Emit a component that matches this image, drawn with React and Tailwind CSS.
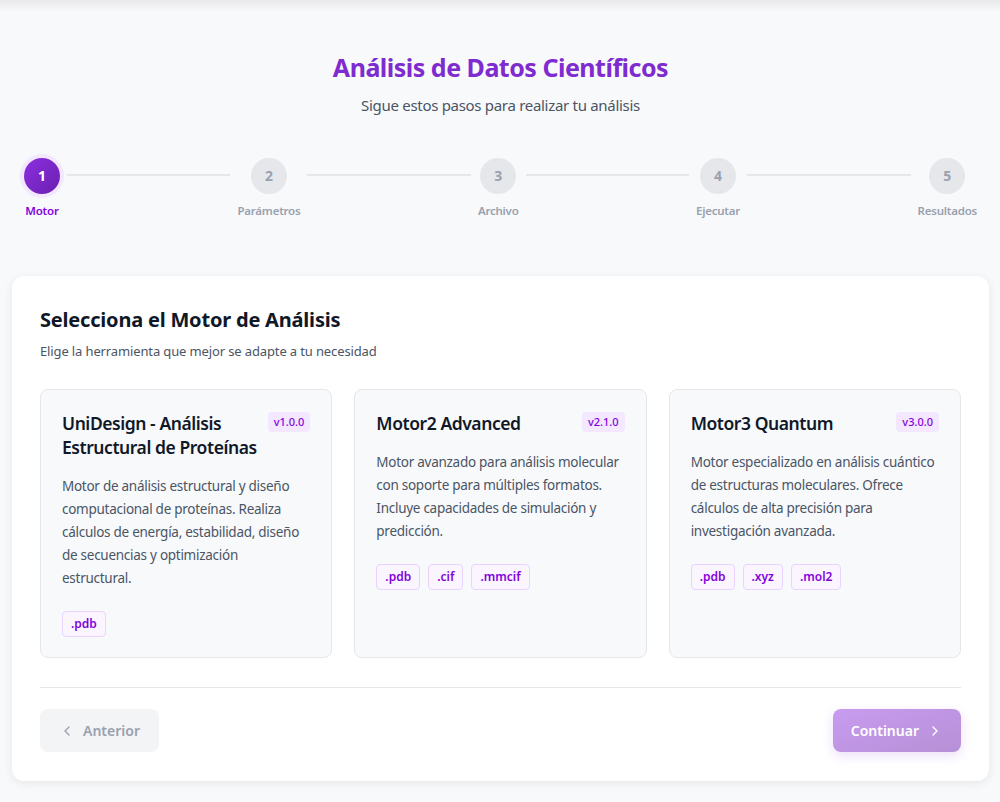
import { Fragment } from 'react';
import { ChevronLeft, ChevronRight } from 'lucide-react';

const steps = ['Motor', 'Parámetros', 'Archivo', 'Ejecutar', 'Resultados'];

const engines = [
  {
    name: 'UniDesign - Análisis Estructural de Proteínas',
    version: 'v1.0.0',
    desc: 'Motor de análisis estructural y diseño computacional de proteínas. Realiza cálculos de energía, estabilidad, diseño de secuencias y optimización estructural.',
    formats: ['.pdb'],
  },
  {
    name: 'Motor2 Advanced',
    version: 'v2.1.0',
    desc: 'Motor avanzado para análisis molecular con soporte para múltiples formatos. Incluye capacidades de simulación y predicción.',
    formats: ['.pdb', '.cif', '.mmcif'],
  },
  {
    name: 'Motor3 Quantum',
    version: 'v3.0.0',
    desc: 'Motor especializado en análisis cuántico de estructuras moleculares. Ofrece cálculos de alta precisión para investigación avanzada.',
    formats: ['.pdb', '.xyz', '.mol2'],
  },
];

export default function App() {
  return (
    <div className="min-h-screen bg-[#f8f9fb] font-['Noto_Sans',sans-serif] text-gray-900">
      <div className="h-3 bg-gradient-to-b from-[#e9e9ec] to-transparent" />

      <div className="pl-3 pr-[11px] pb-6">
        {/* Header */}
        <div className="text-center pt-[37px]">
          <h1 className="text-[25px] leading-[36px] font-bold tracking-[-0.02em] text-[#7e2bd0]">Análisis de Datos Científicos</h1>
          <p className="mt-[9px] text-[15px] tracking-[-0.02em] text-gray-600">Sigue estos pasos para realizar tu análisis</p>
        </div>

        {/* Stepper */}
        <div className="flex items-start px-3 mt-[41px]">
          {steps.map((s, i) => (
            <Fragment key={s}>
              <div className="flex flex-col items-center shrink-0">
                {i === 0 ? (
                  <div className="w-9 h-9 rounded-full bg-gradient-to-br from-[#8b2fe0] to-[#6b1fb0] ring-4 ring-purple-100 flex items-center justify-center text-white text-sm font-bold">
                    1
                  </div>
                ) : (
                  <div className="w-9 h-9 rounded-full bg-gray-200 flex items-center justify-center text-gray-400 text-sm font-bold">
                    {i + 1}
                  </div>
                )}
                <span className={`mt-[8px] text-[11.5px] tracking-[-0.02em] font-semibold ${i === 0 ? 'text-purple-700' : 'text-gray-400'}`}>{s}</span>
              </div>
              {i < steps.length - 1 && <div className="flex-1 h-0.5 bg-gray-200 mx-[7px] mt-[16px]" />}
            </Fragment>
          ))}
        </div>

        {/* Main card */}
        <div className="mt-[57px] bg-white rounded-xl shadow-[0_2px_10px_rgba(0,0,0,0.08)] px-7 pt-[30px] pb-[29px]">
          <h2 className="text-xl font-bold tracking-[-0.01em] text-gray-900">Selecciona el Motor de Análisis</h2>
          <p className="mt-[8px] text-[13px] tracking-[-0.01em] text-gray-600">Elige la herramienta que mejor se adapte a tu necesidad</p>

          <div className="grid grid-cols-3 gap-[22px] mt-[28px]">
            {engines.map((e) => (
              <div key={e.name} className="bg-[#f8f9fb] border border-gray-200 rounded-lg px-[21px] pt-[21px] pb-[20px]">
                <div className="flex items-start justify-between gap-2">
                  <h3 className="text-[17.5px] leading-6 font-semibold tracking-[-0.025em] text-gray-900">{e.name}</h3>
                  <span className="shrink-0 mt-[1px] text-[11px] leading-5 font-medium text-purple-700 bg-purple-100 rounded px-1.5">{e.version}</span>
                </div>
                <p className="mt-[16px] text-[13.5px] leading-[23px] tracking-[-0.02em] text-gray-600">{e.desc}</p>
                <div className="flex gap-2 mt-[21px]">
                  {e.formats.map((f) => (
                    <span key={f} className="text-xs font-semibold text-purple-700 bg-purple-50 border border-purple-200 rounded px-[8px] py-[4px]">
                      {f}
                    </span>
                  ))}
                </div>
              </div>
            ))}
          </div>

          <div className="border-t border-gray-200 mt-[29px] pt-[21px] flex justify-between">
            <button className="flex items-center gap-2 px-[19px] h-[43px] rounded-lg bg-gray-100 text-gray-400 text-sm font-semibold">
              <ChevronLeft className="w-4 h-4" />
              Anterior
            </button>
            <button className="flex items-center gap-2 px-[18px] h-[43px] rounded-lg bg-gradient-to-br from-[#c89bf0] to-[#b690d6] text-white text-sm font-semibold shadow-[0_4px_12px_rgba(126,43,208,0.15)]">
              Continuar
              <ChevronRight className="w-4 h-4" />
            </button>
          </div>
        </div>
      </div>
    </div>
  );
}
